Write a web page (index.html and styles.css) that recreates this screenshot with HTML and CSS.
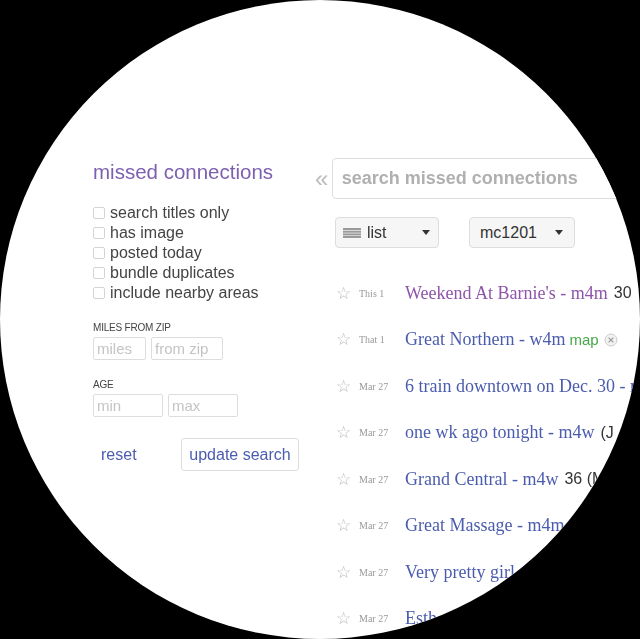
FILE: index.html
```html
<!DOCTYPE html>
<html lang="en">
<head>
  <meta charset="UTF-8" />
  <meta name="viewport" content="width=device-width, initial-scale=1.0" />
  <title>missed connections</title>
  <link rel="stylesheet" href="styles.css">
</head>
<body>

  <div class="lens">

    <aside class="sidebar">
      <h2 class="cat-title">missed connections</h2>

      <ul class="options">
        <li><input type="checkbox" class="check"> search titles only</li>
        <li><input type="checkbox" class="check"> has image</li>
        <li><input type="checkbox" class="check"> posted today</li>
        <li><input type="checkbox" class="check"> bundle duplicates</li>
        <li><input type="checkbox" class="check"> include nearby areas</li>
      </ul>

      <div class="field">
        <div class="field-label">MILES FROM ZIP</div>
        <div class="field-inputs">
          <input class="small miles" placeholder="miles">
          <input class="small zip" placeholder="from zip">
        </div>
      </div>

      <div class="field">
        <div class="field-label">AGE</div>
        <div class="field-inputs">
          <input class="small age" placeholder="min">
          <input class="small age" placeholder="max">
        </div>
      </div>

      <div class="actions">
        <a href="#" class="reset">reset</a>
        <button class="update">update search</button>
      </div>
    </aside>

    <main class="results">
      <div class="search-row">
        <span class="collapse">&laquo;</span>
        <input class="search" placeholder="search missed connections">
      </div>

      <div class="toolbar">
        <div class="dropdown view">
          <svg class="list-icon" width="18" height="10" viewBox="0 0 18 10">
            <rect x="0" y="0" width="18" height="2" fill="#9a9a9a"/>
            <rect x="0" y="2.7" width="18" height="2" fill="#9a9a9a"/>
            <rect x="0" y="5.4" width="18" height="2" fill="#9a9a9a"/>
            <rect x="0" y="8" width="18" height="2" fill="#9a9a9a"/>
          </svg>
          <span class="dd-text">list</span>
          <svg class="caret" width="8" height="5" viewBox="0 0 8 5"><path d="M0 0h8L4 5z" fill="#333"/></svg>
        </div>
        <div class="dropdown code">
          <span class="dd-text">mc1201</span>
          <svg class="caret" width="8" height="5" viewBox="0 0 8 5"><path d="M0 0h8L4 5z" fill="#333"/></svg>
        </div>
      </div>

      <ul class="rows">
        <li class="row">
          <span class="star">&#9734;</span>
          <span class="date">This 1</span>
          <a href="#" class="title visited">Weekend At Barnie's - m4m</a>
          <span class="meta">30</span>
        </li>
        <li class="row">
          <span class="star">&#9734;</span>
          <span class="date">That 1</span>
          <a href="#" class="title">Great Northern - w4m</a>
          <span class="map">map</span>
          <svg class="hide" width="14" height="14" viewBox="0 0 14 14">
            <circle cx="7" cy="7" r="6" fill="#f2f2f2" stroke="#ccc"/>
            <path d="M4.6 4.6l4.8 4.8M9.4 4.6l-4.8 4.8" stroke="#999" stroke-width="1.2"/>
          </svg>
        </li>
        <li class="row">
          <span class="star">&#9734;</span>
          <span class="date">Mar 27</span>
          <a href="#" class="title">6 train downtown on Dec. 30 - m4w</a>
        </li>
        <li class="row">
          <span class="star">&#9734;</span>
          <span class="date">Mar 27</span>
          <a href="#" class="title">one wk ago tonight - m4w</a>
          <span class="meta">(J</span>
        </li>
        <li class="row">
          <span class="star">&#9734;</span>
          <span class="date">Mar 27</span>
          <a href="#" class="title">Grand Central - m4w</a>
          <span class="meta">36 (M</span>
        </li>
        <li class="row">
          <span class="star">&#9734;</span>
          <span class="date">Mar 27</span>
          <a href="#" class="title">Great Massage - m4m</a>
        </li>
        <li class="row">
          <span class="star">&#9734;</span>
          <span class="date">Mar 27</span>
          <a href="#" class="title">Very pretty girl</a>
        </li>
        <li class="row">
          <span class="star">&#9734;</span>
          <span class="date">Mar 27</span>
          <a href="#" class="title">Esth</a>
        </li>
      </ul>
    </main>

  </div>

</body>
</html>
```

FILE: styles.css
```css
  * {
    box-sizing: border-box;
    margin: 0;
    padding: 0;
  }

  body {
    background: #000;
    font-family: 'Liberation Sans', Arial, sans-serif;
    overflow: hidden;
  }

  /* round window onto the page */
  .lens {
    width: 640px;
    height: 639px;
    border-radius: 50%;
    overflow: hidden;
    background: #fff;
    display: flex;
    filter: blur(0.5px);
  }

  .sidebar {
    flex: 0 0 207px;
    margin-left: 93px;
    padding-top: 160px;
  }

  .cat-title {
    font-size: 20.5px;
    line-height: 24px;
    font-weight: normal;
    color: #7d5fb0;
    margin-bottom: 19px;
    white-space: nowrap;
  }

  .options {
    list-style: none;
  }

  .options li {
    display: flex;
    align-items: center;
    font-size: 16px;
    line-height: 20px;
    color: #444;
    white-space: nowrap;
  }

  .check {
    appearance: none;
    width: 12px;
    height: 12px;
    border: 1px solid #d4d4d4;
    border-radius: 2px;
    margin-right: 5px;
    background: #fff;
  }

  .field {
    margin-top: 19px;
  }

  .field-label {
    font-size: 10px;
    line-height: 12px;
    color: #444;
    letter-spacing: -0.2px;
  }

  .field-inputs {
    display: flex;
    gap: 5px;
    margin-top: 3px;
  }

  .small {
    height: 23px;
    border: 1px solid #ddd;
    border-radius: 2px;
    padding: 0 3px;
    font-family: inherit;
    font-size: 15px;
    color: #333;
  }

  .small::placeholder {
    color: #c4c4c4;
  }

  .miles { width: 53px; }
  .zip { width: 72px; }
  .age { width: 70px; }

  .actions {
    display: flex;
    align-items: center;
    margin-top: 21px;
  }

  .reset {
    width: 88px;
    padding-left: 8px;
    font-size: 16px;
    color: #4b5cae;
    text-decoration: none;
  }

  .update {
    width: 118px;
    height: 33px;
    border: 1px solid #ddd;
    border-radius: 3px;
    background: #fff;
    font-family: inherit;
    font-size: 16px;
    color: #4b5cae;
  }

  .results {
    flex: 1;
    margin-left: 15px;
    padding-top: 158px;
    min-width: 0;
  }

  .search-row {
    display: flex;
    align-items: center;
  }

  .collapse {
    width: 18px;
    font-size: 24px;
    color: #bbb;
    line-height: 41px;
  }

  .search {
    width: 330px;
    height: 41px;
    border: 1px solid #ddd;
    border-radius: 4px;
    padding-left: 9px;
    font-family: inherit;
    font-size: 18px;
    font-weight: bold;
  }

  .search::placeholder {
    color: #b0b0b0;
  }

  .toolbar {
    display: flex;
    gap: 30px;
    margin-top: 18px;
    margin-left: 20px;
  }

  .dropdown {
    display: flex;
    align-items: center;
    height: 31px;
    border: 1px solid #ddd;
    border-radius: 4px;
    background: #f6f6f6;
    font-size: 16px;
    color: #333;
  }

  .view {
    width: 104px;
    padding-left: 7px;
  }

  .list-icon {
    margin-right: 6px;
  }

  .view .caret {
    margin-left: 35px;
  }

  .code {
    width: 106px;
    padding-left: 10px;
  }

  .code .caret {
    margin-left: 18px;
  }

  .rows {
    list-style: none;
    margin-top: 22px;
  }

  .row {
    display: flex;
    align-items: center;
    height: 46.5px;
    padding-left: 21px;
    white-space: nowrap;
  }

  .star {
    flex-shrink: 0;
    width: 23px;
    font-size: 17px;
    color: #bbb;
  }

  .date {
    flex-shrink: 0;
    width: 46px;
    font-family: 'Liberation Serif', 'Times New Roman', serif;
    font-size: 10px;
    color: #999;
  }

  .title {
    flex-shrink: 0;
    font-family: 'Liberation Serif', 'Times New Roman', serif;
    font-size: 18px;
    color: #4b5cae;
    text-decoration: none;
  }

  .title.visited {
    color: #8e55ab;
  }

  .meta {
    flex-shrink: 0;
    margin-left: 6px;
    font-size: 16px;
    color: #333;
  }

  .map {
    flex-shrink: 0;
    margin-left: 4px;
    font-size: 15px;
    color: #47a84a;
  }

  .hide {
    flex-shrink: 0;
    margin-left: 5px;
  }
```
